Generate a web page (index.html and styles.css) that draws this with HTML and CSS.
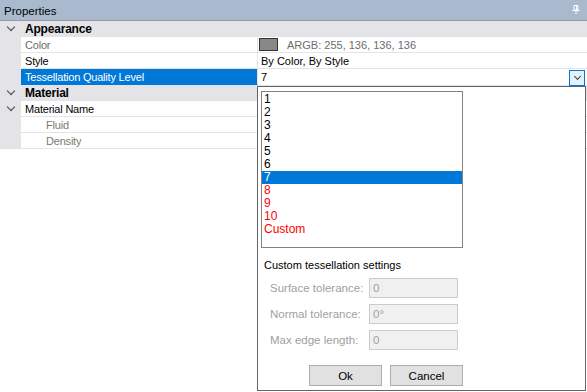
FILE: index.html
```html
<!DOCTYPE html>
<html lang="en">
	<head>
		<meta charset="utf-8" />
		<title>Properties</title>
		<link rel="stylesheet" href="styles.css">
	</head>
	<body>
		<div id="panel">
			<header class="titlebar">
				<span>Properties</span>
				<svg class="pin" width="8" height="9" viewBox="0 0 8 9">
					<path d="M2 0.5h4v4.5h-4z" fill="none" stroke="#fff" stroke-width="1" />
					<path d="M4.5 1v4" stroke="#fff" stroke-width="1" />
					<path d="M0.5 5.5h7" stroke="#fff" stroke-width="1" />
					<path d="M4 6v3" stroke="#fff" stroke-width="1" />
				</svg>
			</header>

			<div class="grid">
				<div class="row category">
					<div class="gutter"><span class="chev"></span></div>
					<div class="name">Appearance</div>
				</div>
				<div class="row">
					<div class="gutter"></div>
					<div class="name dim">Color</div>
					<div class="value dim"><span class="swatch"></span>ARGB: 255, 136, 136, 136</div>
				</div>
				<div class="row">
					<div class="gutter"></div>
					<div class="name">Style</div>
					<div class="value">By Color, By Style</div>
				</div>
				<div class="row selected">
					<div class="gutter"></div>
					<div class="name">Tessellation Quality Level</div>
					<div class="value">
						<span>7</span>
						<span class="dropbtn"><span class="chev small"></span></span>
					</div>
				</div>
				<div class="row category">
					<div class="gutter"><span class="chev"></span></div>
					<div class="name">Material</div>
				</div>
				<div class="row">
					<div class="gutter"><span class="chev"></span></div>
					<div class="name">Material Name</div>
					<div class="value"></div>
				</div>
				<div class="row">
					<div class="gutter"></div>
					<div class="name sub">Fluid</div>
					<div class="value"></div>
				</div>
				<div class="row">
					<div class="gutter"></div>
					<div class="name sub">Density</div>
					<div class="value"></div>
				</div>
			</div>

			<div class="popup">
				<ul class="list">
					<li>1</li>
					<li>2</li>
					<li>3</li>
					<li>4</li>
					<li>5</li>
					<li>6</li>
					<li class="on">7</li>
					<li class="warn">8</li>
					<li class="warn">9</li>
					<li class="warn">10</li>
					<li class="warn">Custom</li>
				</ul>

				<p class="group">Custom tessellation settings</p>
				<div class="field">
					<label>Surface tolerance:</label>
					<span class="input">0</span>
				</div>
				<div class="field">
					<label>Normal tolerance:</label>
					<span class="input">0°</span>
				</div>
				<div class="field">
					<label>Max edge length:</label>
					<span class="input">0</span>
				</div>

				<div class="buttons">
					<button>Ok</button>
					<button>Cancel</button>
				</div>
			</div>
		</div>
	</body>
</html>
```

FILE: styles.css
```css
body{
	margin: 0;
	background-color: #ffffff;
	font-family: "Liberation Sans", Arial, sans-serif;
	font-size: 11px;
	color: #000000;
}

#panel{
	position: relative;
	width: 587px;
	height: 392px;
	overflow: hidden;
}

.titlebar{
	height: 20px;
	background-color: #a9bacf;
	border-bottom: 1px solid #9a9a9a;
	display: flex;
	align-items: center;
	justify-content: space-between;
	padding: 1px 7px 0 4px;
	box-sizing: border-box;
	height: 21px;
	font-size: 11.5px;
	color: #000000;
}

.pin{
	margin-top: -2px;
}

.row{
	display: flex;
	height: 16px;
}

.gutter{
	width: 21px;
	flex: none;
	background-color: #e3e3e8;
	display: flex;
	align-items: center;
	justify-content: center;
}

.name{
	width: 232px;
	flex: none;
	padding-left: 4px;
	padding-top: 2px;
	line-height: 13px;
	border-bottom: 1px solid #e3e3e8;
	border-right: 1px solid #e3e3e8;
	white-space: nowrap;
	letter-spacing: -0.2px;
}

.value{
	flex: 1;
	line-height: 13px;
	padding-top: 2px;
	padding-left: 3px;
	border-bottom: 1px solid #e3e3e8;
	display: flex;
	align-items: center;
	white-space: nowrap;
}

.dim{
	color: #6d6d6d;
}

.sub{
	padding-left: 25px;
	width: 211px;
	color: #7a7a6e;
}

.category{
	background-color: #e3e3e8;
}

.category .name{
	font-weight: bold;
	font-size: 12px;
	border: none;
	width: auto;
}

.selected .name{
	background-color: #0078d7;
	color: #ffffff;
	border-bottom-color: #0078d7;
}

.selected .value{
	justify-content: space-between;
	padding-top: 0;
	padding-right: 2px;
	border-bottom: none;
}

.swatch{
	display: inline-block;
	background-color: #888888;
	border: 1px solid #333333;
	box-sizing: border-box;
	width: 19px;
	height: 13px;
	margin: -2px 9px 0 -2px;
}

.chev{
	width: 5px;
	height: 5px;
	border-right: 1.5px solid #404040;
	border-bottom: 1.5px solid #404040;
	transform: rotate(45deg);
	margin-top: -4px;
}

.dropbtn{
	width: 14px;
	height: 14px;
	border: 1px solid #0078d7;
	background-color: #e5f1fb;
	display: flex;
	align-items: center;
	justify-content: center;
	margin-top: 1px;
}

.chev.small{
	width: 4px;
	height: 4px;
	border-width: 1px;
	margin-top: -2px;
}

.popup{
	position: absolute;
	left: 257px;
	top: 86px;
	width: 324px;
	height: 299px;
	border: 1px solid #646464;
	background-color: #ffffff;
	padding: 4px 0 0 3px;
}

.list{
	list-style: none;
	margin: 0;
	padding: 1px 0 0 0;
	width: 200px;
	height: 154px;
	border: 1px solid #828282;
	font-size: 12px;
}

.list li{
	height: 13px;
	line-height: 13px;
	padding-left: 2px;
}

.list li.on{
	background-color: #0078d7;
	color: #ffffff;
}

.list li.warn{
	color: #ff0000;
}

.group{
	margin: 11px 0 7px 3px;
	font-size: 11px;
}

.field{
	display: flex;
	align-items: center;
	margin-left: 9px;
	margin-bottom: 6px;
	height: 20px;
}

.field label{
	width: 99px;
	color: #a0a0a0;
	font-size: 11.5px;
}

.input{
	width: 84px;
	height: 18px;
	line-height: 18px;
	padding-left: 3px;
	background-color: #f0f0f0;
	border: 1px solid #cccccc;
	color: #a0a0a0;
	font-size: 11.5px;
}

.buttons{
	display: flex;
	gap: 8px;
	margin: 15px 0 0 48px;
}

.buttons button{
	width: 73px;
	height: 21px;
	background-color: #e1e1e1;
	border: 1px solid #adadad;
	font-family: "Liberation Sans", Arial, sans-serif;
	font-size: 11.5px;
	color: #000000;
	padding: 0;
}
```
